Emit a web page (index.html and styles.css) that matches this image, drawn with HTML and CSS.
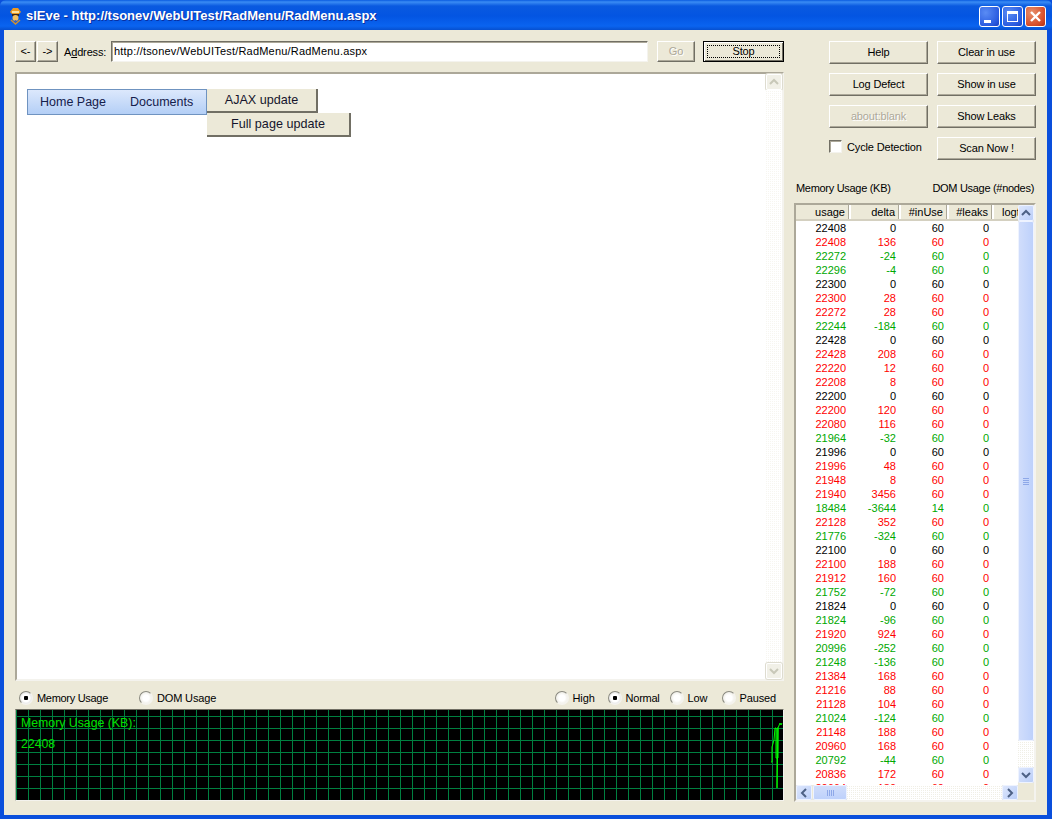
FILE: index.html
```html
<!DOCTYPE html>
<html lang="en">
<head>
<meta charset="utf-8">
<title>sIEve</title>
<link rel="stylesheet" href="styles.css">
</head>
<body>
<div class="window">
  <header class="titlebar">
    <svg class="appicon" width="15" height="19" viewBox="0 0 15 19"><path d="M2 6 L5 2 H10 L13 6 L11 8 H4 Z" fill="#ee9a20"/><path d="M4 5 H11 V7 H4 Z" fill="#f8e0a0"/><rect x="4" y="8" width="7" height="2" fill="#3a2a20"/><circle cx="7.500" cy="12" r="3" fill="#f2c060"/><path d="M3 14 L7.500 18 L12 14" fill="none" stroke="#d09030" stroke-width="1.500"/><circle cx="7.500" cy="15" r="1" fill="#5060b0"/></svg>
    <span class="title">sIEve - http://tsonev/WebUITest/RadMenu/RadMenu.aspx</span>
    <div class="winbtns">
      <span class="winbtn"><svg width="21" height="21" viewBox="0 0 21 21"><rect x="5" y="14" width="7" height="3" fill="#fff"/></svg></span>
      <span class="winbtn"><svg width="21" height="21" viewBox="0 0 21 21"><path d="M5 5 H16 V16 H5 Z M6 8 V15 H15 V8 Z" fill="#fff" fill-rule="evenodd"/></svg></span>
      <span class="winbtn close"><svg width="21" height="21" viewBox="0 0 21 21"><path d="M6 6 L15 15 M15 6 L6 15" stroke="#fff" stroke-width="2.400"/></svg></span>
    </div>
  </header>
  <main class="client">
    <section class="left">
      <div class="toolbar">
        <button class="btn nav">&lt;-</button>
        <button class="btn nav">-&gt;</button>
        <label class="addr-label">A<u>d</u>dress:</label>
        <div class="addr">http://tsonev/WebUITest/RadMenu/RadMenu.aspx</div>
        <button class="btn go disabled">Go</button>
        <button class="btn stop"><span>Stop</span></button>
      </div>
      <div class="browser">
        <div class="page">
          <nav class="menu"><span>Home Page</span><span>Documents</span></nav>
          <div class="sub one">AJAX update</div>
          <div class="sub two">Full page update</div>
        </div>
        <div class="vbar light">
          <span class="sb-btn light-btn"><svg width="16" height="16" viewBox="0 0 16 16"><path d="M4 10 L8 6 L12 10" fill="none" stroke="#c8c8b8" stroke-width="2"/></svg></span>
          <span class="track pale"></span>
          <span class="sb-btn light-btn"><svg width="16" height="16" viewBox="0 0 16 16"><path d="M4 6 L8 10 L12 6" fill="none" stroke="#c8c8b8" stroke-width="2"/></svg></span>
        </div>
      </div>
      <div class="modes">
        <div class="modes-left">
          <label class="radio on mem">Memory Usage</label>
          <label class="radio dom">DOM Usage</label>
        </div>
        <div class="modes-right">
          <label class="radio high">High</label>
          <label class="radio on normal">Normal</label>
          <label class="radio low">Low</label>
          <label class="radio">Paused</label>
        </div>
      </div>
      <div class="graph">
        <div class="g1">Memory Usage (KB):</div>
        <div class="g2">22408</div>
        <svg class="trace" width="30" height="90" viewBox="0 0 30 90"><polyline points="18,52 19,52 19,37 21,30 22,18 23,18 23,48 25,48 25,18 24,18 24,78 25,18 27,13 28,15 29,13" fill="none" stroke="#00ff00" stroke-width="1"/></svg>
      </div>
    </section>
    <aside class="right">
      <div class="actions">
        <button class="btn act">Help</button>
        <button class="btn act">Clear in use</button>
        <button class="btn act">Log Defect</button>
        <button class="btn act">Show in use</button>
        <button class="btn act disabled">about:blank</button>
        <button class="btn act">Show Leaks</button>
        <label class="check"><span class="box"></span>Cycle Detection</label>
        <button class="btn act">Scan Now !</button>
      </div>
      <div class="captions"><span>Memory Usage (KB)</span><span>DOM Usage (#nodes)</span></div>
      <div class="panel">
        <div class="list">
          <table class="data">
            <colgroup><col class="c1"><col class="c2"><col class="c3"><col class="c4"><col class="c5"></colgroup>
            <thead><tr><th>usage</th><th>delta</th><th>#inUse</th><th>#leaks</th><th class="logt">logtime</th></tr></thead>
            <tbody>
              <tr class="k"><td>22408</td><td>0</td><td>60</td><td>0</td><td></td></tr>
              <tr class="r"><td>22408</td><td>136</td><td>60</td><td>0</td><td></td></tr>
              <tr class="g"><td>22272</td><td>-24</td><td>60</td><td>0</td><td></td></tr>
              <tr class="g"><td>22296</td><td>-4</td><td>60</td><td>0</td><td></td></tr>
              <tr class="k"><td>22300</td><td>0</td><td>60</td><td>0</td><td></td></tr>
              <tr class="r"><td>22300</td><td>28</td><td>60</td><td>0</td><td></td></tr>
              <tr class="r"><td>22272</td><td>28</td><td>60</td><td>0</td><td></td></tr>
              <tr class="g"><td>22244</td><td>-184</td><td>60</td><td>0</td><td></td></tr>
              <tr class="k"><td>22428</td><td>0</td><td>60</td><td>0</td><td></td></tr>
              <tr class="r"><td>22428</td><td>208</td><td>60</td><td>0</td><td></td></tr>
              <tr class="r"><td>22220</td><td>12</td><td>60</td><td>0</td><td></td></tr>
              <tr class="r"><td>22208</td><td>8</td><td>60</td><td>0</td><td></td></tr>
              <tr class="k"><td>22200</td><td>0</td><td>60</td><td>0</td><td></td></tr>
              <tr class="r"><td>22200</td><td>120</td><td>60</td><td>0</td><td></td></tr>
              <tr class="r"><td>22080</td><td>116</td><td>60</td><td>0</td><td></td></tr>
              <tr class="g"><td>21964</td><td>-32</td><td>60</td><td>0</td><td></td></tr>
              <tr class="k"><td>21996</td><td>0</td><td>60</td><td>0</td><td></td></tr>
              <tr class="r"><td>21996</td><td>48</td><td>60</td><td>0</td><td></td></tr>
              <tr class="r"><td>21948</td><td>8</td><td>60</td><td>0</td><td></td></tr>
              <tr class="r"><td>21940</td><td>3456</td><td>60</td><td>0</td><td></td></tr>
              <tr class="g"><td>18484</td><td>-3644</td><td>14</td><td>0</td><td></td></tr>
              <tr class="r"><td>22128</td><td>352</td><td>60</td><td>0</td><td></td></tr>
              <tr class="g"><td>21776</td><td>-324</td><td>60</td><td>0</td><td></td></tr>
              <tr class="k"><td>22100</td><td>0</td><td>60</td><td>0</td><td></td></tr>
              <tr class="r"><td>22100</td><td>188</td><td>60</td><td>0</td><td></td></tr>
              <tr class="r"><td>21912</td><td>160</td><td>60</td><td>0</td><td></td></tr>
              <tr class="g"><td>21752</td><td>-72</td><td>60</td><td>0</td><td></td></tr>
              <tr class="k"><td>21824</td><td>0</td><td>60</td><td>0</td><td></td></tr>
              <tr class="g"><td>21824</td><td>-96</td><td>60</td><td>0</td><td></td></tr>
              <tr class="r"><td>21920</td><td>924</td><td>60</td><td>0</td><td></td></tr>
              <tr class="g"><td>20996</td><td>-252</td><td>60</td><td>0</td><td></td></tr>
              <tr class="g"><td>21248</td><td>-136</td><td>60</td><td>0</td><td></td></tr>
              <tr class="r"><td>21384</td><td>168</td><td>60</td><td>0</td><td></td></tr>
              <tr class="r"><td>21216</td><td>88</td><td>60</td><td>0</td><td></td></tr>
              <tr class="r"><td>21128</td><td>104</td><td>60</td><td>0</td><td></td></tr>
              <tr class="g"><td>21024</td><td>-124</td><td>60</td><td>0</td><td></td></tr>
              <tr class="r"><td>21148</td><td>188</td><td>60</td><td>0</td><td></td></tr>
              <tr class="r"><td>20960</td><td>168</td><td>60</td><td>0</td><td></td></tr>
              <tr class="g"><td>20792</td><td>-44</td><td>60</td><td>0</td><td></td></tr>
              <tr class="r"><td>20836</td><td>172</td><td>60</td><td>0</td><td></td></tr>
              <tr class="r"><td>20664</td><td>180</td><td>60</td><td>0</td><td></td></tr>
            </tbody>
          </table>
        </div>
        <div class="vbar blue">
          <span class="sb-btn"><svg width="16" height="16" viewBox="0 0 16 16"><path d="M4 10 L8 6 L12 10" fill="none" stroke="#4d6185" stroke-width="2"/></svg></span>
          <span class="thumb-v"><svg width="8" height="9" viewBox="0 0 8 9"><path d="M1 1.500H7M1 3.500H7M1 5.500H7M1 7.500H7" stroke="#8ea8e8"/></svg></span>
          <span class="track"></span>
          <span class="sb-btn"><svg width="16" height="16" viewBox="0 0 16 16"><path d="M4 6 L8 10 L12 6" fill="none" stroke="#4d6185" stroke-width="2"/></svg></span>
        </div>
        <div class="hbar">
          <span class="sb-btn"><svg width="16" height="16" viewBox="0 0 16 16"><path d="M10 4 L6 8 L10 12" fill="none" stroke="#4d6185" stroke-width="2"/></svg></span>
          <span class="thumb-h"><svg width="9" height="8" viewBox="0 0 9 8"><path d="M1.500 1V7M3.500 1V7M5.500 1V7M7.500 1V7" stroke="#8ea8e8"/></svg></span>
          <span class="track"></span>
          <span class="sb-btn"><svg width="16" height="16" viewBox="0 0 16 16"><path d="M6 4 L10 8 L6 12" fill="none" stroke="#4d6185" stroke-width="2"/></svg></span>
        </div>
        <div class="corner"></div>
      </div>
    </aside>
  </main>
</div>
</body>
</html>
```

FILE: styles.css
```css
* { box-sizing: border-box; }
html, body { margin: 0; height: 100%; overflow: hidden; }
body { font-family: "Liberation Sans", Arial, sans-serif; font-size: 11px; letter-spacing: -0.15px; color: #000; }

.window {
  width: 1052px; height: 819px; display: flex; flex-direction: column;
  background: #0a4fdc; padding: 0 5px 4px 4px;
}
.titlebar {
  height: 30px; margin: 0 -5px 0 -4px; padding: 0 6px 0 8px; display: flex; align-items: center;
  background: linear-gradient(180deg, #0a5be0 0, #3a8cf4 2px, #0a5ae0 6px, #0355e2 16px, #0a64f0 26px, #0650d0 30px);
  border-radius: 6px 6px 0 0;
}
.appicon { margin-right: 3px; flex: none; }
.title { color: #fff; font-weight: bold; font-size: 13px; letter-spacing: 0; text-shadow: 1px 1px 0 #0a2fa0; white-space: nowrap; }
.winbtns { margin-left: auto; display: flex; gap: 2px; padding-top: 3px; }
.winbtn {
  width: 21px; height: 21px; border: 1px solid #fff; border-radius: 3px; display: block; overflow: hidden;
  background: radial-gradient(circle at 30% 30%, #5a8cf4, #2a5ce0 70%, #1a40c0);
}
.winbtn svg { display: block; margin: -1px; }
.winbtn.close { background: radial-gradient(circle at 30% 30%, #e8906c, #d8502c 65%, #b03010); }

.client {
  flex: 1; background: #ece9d8; display: flex; padding: 11px 11px 13px 11px; gap: 10px; min-height: 0;
}
.left { width: 769px; display: flex; flex-direction: column; flex: none; }
.right { width: 242px; display: flex; flex-direction: column; flex: none; }

.btn {
  font: inherit; letter-spacing: inherit; color: #000; background: #ece9d8; padding: 0 0 2px; margin: 0;
  border: 1px solid; border-color: #fff #716f64 #716f64 #fff;
  box-shadow: inset -1px -1px 0 #aca899; border-radius: 0;
}
.btn.disabled { color: #aca899; text-shadow: 1px 1px 0 #fff; }

.toolbar { height: 21px; display: flex; align-items: stretch; }
.nav { width: 21px; margin-right: 1px; }
.addr-label { width: 47px; margin-left: 5px; line-height: 22px; white-space: nowrap; }
.addr {
  width: 537px; background: #fff; line-height: 18px; padding-left: 2px; white-space: nowrap; letter-spacing: 0.2px;
  border: 1px solid; border-color: #716f64 #f4f3ee #f4f3ee #716f64;
  box-shadow: inset 1px 1px 0 #aca899;
}
.go { width: 38px; margin-left: 9px; }
.stop { width: 81px; margin-left: 8px; border: 1px solid #000; box-shadow: inset 1px 1px 0 #fff, inset -1px -1px 0 #716f64; padding: 3px; }
.stop span { display: block; height: 100%; border: 1px dotted #000; line-height: 11px; }

.browser {
  height: 609px; margin-top: 10px; display: flex; background: #fff;
  border: 2px solid; border-color: #aca899 #f4f3ee #f4f3ee #aca899;
}
.page { flex: 1; position: relative; }
.menu {
  position: absolute; left: 10px; top: 15px; width: 180px; height: 26px; display: flex; align-items: center;
  background: linear-gradient(180deg, #dce8fc, #b4cff6); border: 1px solid #6f93c0; color: #15204c; padding: 0 0 0 12px; gap: 24px; font-size: 12.500px; letter-spacing: 0;
}
.sub {
  position: absolute; left: 190px; background: #ece9d8; height: 24px; line-height: 23px; color: #15152c; font-size: 12.600px; letter-spacing: 0; text-align: center;
  border-right: 2px solid #716f64; border-bottom: 2px solid #716f64;
}
.sub.one { top: 15px; width: 111px; }
.sub.two { top: 39px; width: 144px; }

.vbar { width: 16px; display: flex; flex-direction: column; flex: none; }
.vbar.light { background: #fbfbf8; }
.track {
  flex: 1; background-color: #fff;
  background-image: linear-gradient(45deg, #f0efe6 25%, transparent 25%, transparent 75%, #f0efe6 75%);
  background-size: 2px 2px;
}
.track.pale { background-image: linear-gradient(45deg, #f7f6f0 25%, transparent 25%, transparent 75%, #f7f6f0 75%); }
.sb-btn {
  display: block; flex: none; width: 16px; height: 16px; border-radius: 2px;
  background: linear-gradient(135deg, #dfe8fd, #b9cdf8); box-shadow: inset 0 0 0 1px #eef3ff;
}
.sb-btn svg { display: block; }
.light-btn { background: #f1f0e7; box-shadow: inset 0 0 0 1px #fff, 0 0 0 1px #dedcd0; }
.thumb-v {
  height: 520px; background: linear-gradient(90deg, #d2defb, #bcd0fb); border-radius: 2px; box-shadow: inset 0 0 0 1px #eef3ff;
  display: flex; align-items: center; justify-content: center; flex: none;
}
.thumb-h {
  width: 34px; margin-left: 1px; background: linear-gradient(180deg, #d2defb, #bcd0fb); border-radius: 2px; box-shadow: inset 0 0 0 1px #eef3ff;
  display: flex; align-items: center; justify-content: center; flex: none;
}

.modes { height: 28px; display: flex; justify-content: space-between; align-items: center; padding: 6px 8px 0 4px; }
.modes-left, .modes-right { display: flex; }
.radio { display: flex; align-items: center; white-space: nowrap; }
.radio::before {
  content: ""; width: 12px; height: 12px; border-radius: 50%; margin-right: 4px; flex: none;
  background: radial-gradient(circle, #fff 0 3px, #f4f3ee 5px);
  border: 1px solid #8a8a80; border-right-color: #f4f3ee; border-bottom-color: #f4f3ee;
}
.radio.on::before { background: radial-gradient(circle, #000 0 2px, #fff 2.500px 4px, #eee 5px); }
.mem { width: 120px; letter-spacing: -0.3px; }
.dom { width: 76px; }
.high { width: 53px; }
.normal { width: 62px; letter-spacing: -0.25px; }
.low { width: 52px; }

.graph {
  height: 92px; position: relative; border-left: 1px solid #aca899; border-top: 1px solid #716f64; border-right: 1px solid #f4f3ee; border-bottom: 1px solid #f4f3ee;
  padding: 6px 0 0 5px; color: #00e000; font-size: 12.300px; letter-spacing: 0; overflow: hidden;
  background-color: #000;
  background-image: linear-gradient(90deg, #008040 1px, transparent 1px), linear-gradient(180deg, #008040 1px, transparent 1px);
  background-size: 12px 12px;
  background-position: 12px 6px;
}
.g2 { margin-top: 7px; }
.trace { position: absolute; right: 0; top: 0; }

.actions {
  margin-left: 35px; display: grid; grid-template-columns: 99px 99px; column-gap: 9px;
  grid-template-rows: 23px 23px 23px 23px; row-gap: 9px;
}
.act { width: 99px; }
.check { display: flex; align-items: center; padding-bottom: 4px; white-space: nowrap; }
.box {
  width: 13px; height: 13px; background: #fff; margin-right: 5px; flex: none;
  border: 1px solid; border-color: #716f64 #f4f3ee #f4f3ee #716f64; box-shadow: inset 1px 1px 0 #aca899;
}
.captions { display: flex; justify-content: space-between; margin-top: 21px; height: 14px; line-height: 14px; padding: 0 2px; letter-spacing: -0.3px; }
.panel {
  margin-top: 8px; height: 599px; display: grid; grid-template-columns: 1fr 16px; grid-template-rows: 1fr 15px; background: #ece9d8;
  border: 2px solid; border-color: #aca899 #f4f3ee #f4f3ee #aca899;
}
.list { overflow: hidden; background: #fff; min-width: 0; min-height: 0; }
.data { border-collapse: collapse; table-layout: fixed; width: 222px; letter-spacing: 0; }
.c1 { width: 54px; } .c2 { width: 50px; } .c3 { width: 48px; } .c4 { width: 45px; } .c5 { width: 25px; }
th, td { padding: 0 4px 0 0; text-align: right; font-weight: normal; height: 14px; line-height: 14px; white-space: nowrap; overflow: hidden; }
thead th { background: #ece9d8; height: 15px; line-height: 14px; border-right: 2px solid; border-right-color: #fff; box-shadow: inset -1px 0 0 #aca899; border-bottom: 2px solid #d4d0c0; }
th.logt { padding: 0 0 0 8px; text-align: left; border-right: 0; box-shadow: none; }
.k td { color: #000; } .r td { color: #ff0000; } .g td { color: #00a800; }
.vbar.blue { grid-column: 2; grid-row: 1; padding-bottom: 2px; background: #ece9d8; }
.hbar { grid-column: 1; grid-row: 2; display: flex; height: 15px; background: #ece9d8; }
.hbar .sb-btn { height: 15px; }
.corner { grid-column: 2; grid-row: 2; background: #ece9d8; }
```
